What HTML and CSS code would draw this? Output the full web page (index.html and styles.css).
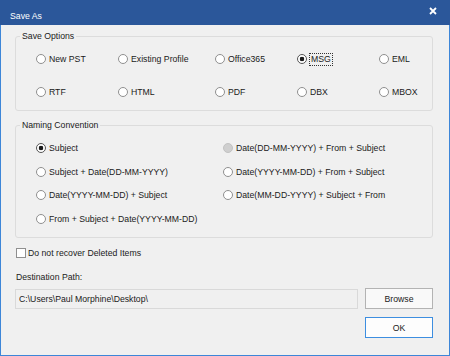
FILE: index.html
```html
<!DOCTYPE html>
<html lang="en">

<head>
    <meta charset="UTF-8">
    <meta name="viewport" content="width=device-width, initial-scale=1.0">
    <title>Save As</title>
    <link rel="stylesheet" href="styles.css">
</head>

<body>
    <div class="window">
        <div class="titlebar">
            <span class="title">Save As</span>
            <svg class="close" width="8" height="8" viewBox="0 0 8 8">
                <path d="M1 1L7 7M7 1L1 7" stroke="#fff" stroke-width="1.8" />
            </svg>
        </div>

        <div class="content">
            <fieldset class="group">
                <legend>Save Options</legend>
                <div class="formats">
                    <label class="opt"><input type="radio" name="fmt">New PST</label>
                    <label class="opt"><input type="radio" name="fmt">Existing Profile</label>
                    <label class="opt"><input type="radio" name="fmt">Office365</label>
                    <label class="opt"><input type="radio" name="fmt" checked><span class="focus">MSG</span></label>
                    <label class="opt"><input type="radio" name="fmt">EML</label>
                    <label class="opt"><input type="radio" name="fmt">RTF</label>
                    <label class="opt"><input type="radio" name="fmt">HTML</label>
                    <label class="opt"><input type="radio" name="fmt">PDF</label>
                    <label class="opt"><input type="radio" name="fmt">DBX</label>
                    <label class="opt"><input type="radio" name="fmt">MBOX</label>
                </div>
            </fieldset>

            <fieldset class="group group-naming">
                <legend>Naming Convention</legend>
                <div class="naming">
                    <label class="opt"><input type="radio" name="nc" checked>Subject</label>
                    <label class="opt"><input type="radio" name="nc" disabled>Date(DD-MM-YYYY) + From + Subject</label>
                    <label class="opt"><input type="radio" name="nc">Subject + Date(DD-MM-YYYY)</label>
                    <label class="opt"><input type="radio" name="nc">Date(YYYY-MM-DD) + From + Subject</label>
                    <label class="opt"><input type="radio" name="nc">Date(YYYY-MM-DD) + Subject</label>
                    <label class="opt"><input type="radio" name="nc">Date(MM-DD-YYYY) + Subject + From</label>
                    <label class="opt"><input type="radio" name="nc">From + Subject + Date(YYYY-MM-DD)</label>
                </div>
            </fieldset>

            <label class="check"><input type="checkbox">Do not recover Deleted Items</label>

            <div class="dest-label">Destination Path:</div>
            <div class="dest-row">
                <input class="path" type="text" value="C:\Users\Paul Morphine\Desktop\" readonly>
                <button class="btn">Browse</button>
            </div>
            <div class="ok-row">
                <button class="btn btn-ok">OK</button>
            </div>
        </div>
    </div>
</body>

</html>
```

FILE: styles.css
```css
* {
    margin: 0;
    padding: 0;
    box-sizing: border-box;
}

body {
    font-family: "Liberation Sans", Arial, sans-serif;
    font-size: 8.7px;
    color: #1a1a1a;
    background: #fff;
}

.window {
    width: 450px;
    height: 356px;
    background: #f0f0f0;
    border: 1px solid #3d86d8;
    border-top: 0;
}

.titlebar {
    height: 25px;
    margin: 0 -1px;
    background: #2b579a;
    color: #fff;
    display: flex;
    justify-content: space-between;
    align-items: flex-start;
    padding: 0 13px 0 10px;
}

.title {
    line-height: 12px;
    margin-top: 10px;
}

.close {
    margin-top: 7px;
}

.content {
    padding: 5px 16px 0 14px;
}

/* group boxes */
.group {
    border: 1px solid #dcdcdc;
    border-radius: 3px;
    min-width: 0;
}

.group legend {
    margin-left: 4px;
    padding: 0 2px;
    line-height: 12px;
}

.group-naming {
    margin-top: 8px;
}

.formats {
    display: grid;
    grid-template-columns: 82px 97px 82px 82px 1fr;
    row-gap: 21px;
    padding: 11px 0 12px 20px;
}

.naming {
    display: grid;
    grid-template-columns: 187px 1fr;
    row-gap: 11.5px;
    padding: 11px 0 12px 20px;
}

.opt {
    display: flex;
    align-items: center;
    height: 12px;
    line-height: 12px;
    white-space: nowrap;
}

.opt input {
    appearance: none;
    width: 10px;
    height: 10px;
    margin-right: 3px;
    border: 1px solid #8f8f8f;
    border-radius: 50%;
    background: #fff;
    flex: none;
}

.opt input:checked {
    border-color: #555;
    background: radial-gradient(circle, #1a1a1a 0 2px, #fff 2.6px);
}

.opt input:disabled {
    border-color: #c2c2c2;
    background: #cfcfcf;
}

.focus {
    outline: 1px dotted #333;
    padding: 0 1px;
    line-height: 11px;
}

/* checkbox */
.check {
    display: flex;
    align-items: center;
    height: 12px;
    margin-top: 9px;
    white-space: nowrap;
}

.check input {
    appearance: none;
    width: 10px;
    height: 10px;
    margin: 0 2px 0 1px;
    border: 1px solid #8f8f8f;
    background: #fff;
}

/* destination */
.dest-label {
    line-height: 12px;
    margin-top: 12.5px;
    padding-left: 1px;
}

.dest-row {
    display: flex;
    align-items: center;
    margin-top: 5px;
}

.path {
    flex: 1;
    height: 20px;
    padding: 0 3px;
    border: 1px solid #d9d9d9;
    background: #f0f0f0;
    font: inherit;
    color: #1a1a1a;
    outline: none;
}

.btn {
    width: 68px;
    height: 21px;
    border: 1px solid #b3b3b3;
    background: #f9f9f9;
    font: inherit;
    color: #1a1a1a;
}

.dest-row .btn {
    margin-left: 7px;
}

.ok-row {
    display: flex;
    justify-content: flex-end;
    margin-top: 8px;
}

.btn-ok {
    border-color: #3d8ee0;
    background: #fdfdfd;
}
```
